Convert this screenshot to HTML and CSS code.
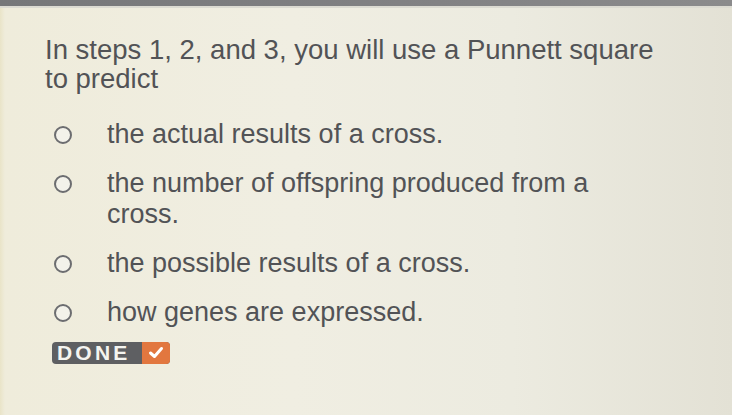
FILE: index.html
```html
<!DOCTYPE html>
<html lang="en">
<head>
<meta charset="utf-8">
<title>Punnett square question</title>
<link rel="stylesheet" href="styles.css">
</head>
<body>
  <div class="topbar"></div>
  <main class="card">
    <p class="prompt">In steps 1, 2, and 3, you will use a Punnett square<br>to predict</p>
    <ul class="choices">
      <li class="choice"><span class="radio"></span><span class="label">the actual results of a cross.</span></li>
      <li class="choice"><span class="radio"></span><span class="label">the number of offspring produced from a<br>cross.</span></li>
      <li class="choice"><span class="radio"></span><span class="label">the possible results of a cross.</span></li>
      <li class="choice"><span class="radio"></span><span class="label">how genes are expressed.</span></li>
    </ul>
    <button class="done" type="button">
      <span class="done-text">DONE</span>
      <span class="done-check">
        <svg width="16" height="13" viewBox="0 0 16 13"><path d="M2.5 7 L6.5 10.5 L13.5 2.5" fill="none" stroke="#fff" stroke-width="3" stroke-linecap="round" stroke-linejoin="round"/></svg>
      </span>
    </button>
  </main>
</body>
</html>
```

FILE: styles.css
```css
html, body {
  margin: 0;
  padding: 0;
  height: 100%;
}

body {
  font-family: "Liberation Sans", Arial, sans-serif;
  color: #525356;
  background: linear-gradient(90deg, #e9e4c8 0px, #efecdb 5px, #f0eee2 40%, #ecebe0 70%, #e3e1d5 100%);
  overflow: hidden;
}

.topbar {
  height: 6px;
  background: linear-gradient(90deg, #767779, #828284 60%, #8b8b8c);
  border-bottom: 2px solid #dcdbd2;
}

.card {
  padding: 27px 0 0 45px;
}

.prompt {
  margin: 0;
  font-size: 27.5px;
  line-height: 29px;
}

.choices {
  list-style: none;
  margin: 26px 0 0 0;
  padding: 0;
}

.choice {
  display: flex;
  align-items: flex-start;
  margin-bottom: 18px;
}

.radio {
  flex: none;
  box-sizing: border-box;
  width: 18px;
  height: 18px;
  border: 2px solid #6c6d70;
  border-radius: 50%;
  margin: 7px 0 0 9px;
  background: #f3f2ea;
}

.label {
  margin-left: 35px;
  font-size: 27px;
  line-height: 31px;
}

.done {
  display: inline-flex;
  align-items: stretch;
  margin: -6px 0 0 7px;
  padding: 0;
  border: 0;
  border-radius: 4px;
  overflow: hidden;
  height: 22px;
  background: #5e5f62;
  font-family: "Liberation Sans", Arial, sans-serif;
  cursor: pointer;
}

.done-text {
  display: flex;
  align-items: center;
  width: 90px;
  box-sizing: border-box;
  padding: 1px 0 0 5px;
  color: #f4f4f0;
  font-weight: bold;
  font-size: 21px;
  letter-spacing: 3.2px;
}

.done-check {
  display: flex;
  align-items: center;
  justify-content: center;
  width: 28px;
  background: #e2773f;
}
```
